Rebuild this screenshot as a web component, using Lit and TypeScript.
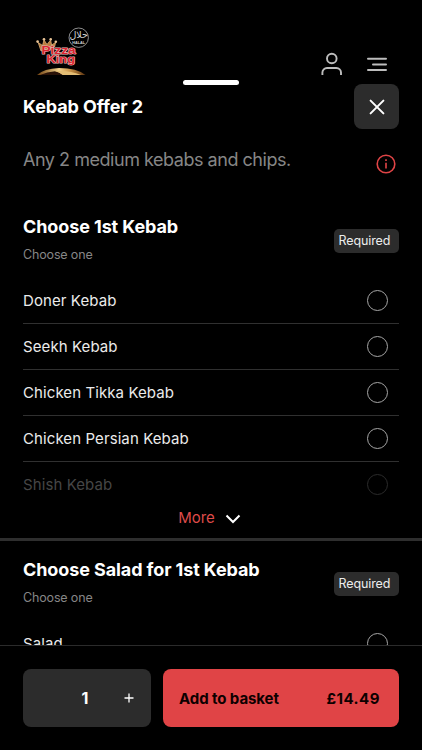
import { css, html, LitElement, svg } from 'lit';
import { customElement, property, state } from 'lit/decorators.js';
import { classMap } from 'lit/directives/class-map.js';

interface OptionGroup {
  title: string;
  hint: string;
  options: string[];
  /** Number of options shown before the list is collapsed. */
  visible?: number;
}

const GROUPS: OptionGroup[] = [
  {
    title: 'Choose 1st Kebab',
    hint: 'Choose one',
    options: [
      'Doner Kebab',
      'Seekh Kebab',
      'Chicken Tikka Kebab',
      'Chicken Persian Kebab',
      'Shish Kebab',
    ],
    visible: 4,
  },
  {
    title: 'Choose Salad for 1st Kebab',
    hint: 'Choose one',
    options: ['Salad'],
  },
];

const UNIT_PRICE = 14.49;

/**
 * Restaurant logo with crown and halal seal.
 */
@customElement('brand-logo')
export class BrandLogo extends LitElement {
  static override styles = css`
    :host {
      display: block;
      width: 56px;
      height: 50px;
    }

    svg {
      display: block;
    }

    .name {
      font: 700 11px 'Liberation Sans', sans-serif;
      fill: #dc2430;
      stroke: #e3b9b6;
      stroke-width: 1.1px;
      stroke-linejoin: round;
      paint-order: stroke;
    }

    .seal-arabic {
      font: 9.5px 'DejaVu Sans', sans-serif;
      fill: #d4d4d4;
    }

    .seal-latin {
      font: 700 3.8px 'Liberation Sans', sans-serif;
      fill: #d4d4d4;
    }
  `;

  private renderCrown() {
    return svg`
      <path d="M6 24 L3.2 15.5 L7.5 18.5 L9 13 L12 17.5 L15.6 13 L16.6 18 L20.6 15.5 L19.5 20 Z"
        fill="#b87a3c" stroke="#dcae76" stroke-width="0.8" />
      <g fill="#e9c395">
        <circle cx="2.6" cy="14.6" r="1.3" />
        <circle cx="9" cy="12.2" r="1.3" />
        <circle cx="15.7" cy="12.2" r="1.3" />
        <circle cx="20.8" cy="14.8" r="1.3" />
      </g>
    `;
  }

  override render() {
    return html`
      <svg width="56" height="50" viewBox="0 0 56 50">
        <defs>
          <linearGradient id="crust" x1="0" x2="1">
            <stop offset="0" stop-color="#70400f" />
            <stop offset="0.45" stop-color="#f2d28c" />
            <stop offset="0.7" stop-color="#c58e43" />
            <stop offset="1" stop-color="#5a3210" />
          </linearGradient>
        </defs>
        ${this.renderCrown()}
        <text class="name" x="6.5" y="27" textLength="34" lengthAdjust="spacingAndGlyphs">Pizza</text>
        <text class="name" x="11.5" y="36.2" textLength="28.5" lengthAdjust="spacingAndGlyphs">King</text>
        <path d="M2 48 Q9 41.5 24 41 Q42 41 50.5 48Z" fill="url(#crust)" />
        <path d="M5 48 Q12 44.6 20 44.2 Q24 45 28 48Z" fill="#2a1208" />
        <path d="M20 44.2 Q34 43 46 48 H28 Q24 45 20 44.2Z" fill="#e3bd74" />
        <circle cx="43.7" cy="10.7" r="9.7" fill="#000" stroke="#b0b0b0" stroke-width="0.8" />
        <text class="seal-arabic" x="43.7" y="11" text-anchor="middle">حلال</text>
        <text class="seal-latin" x="43.7" y="17" text-anchor="middle">HALAL</text>
      </svg>
    `;
  }
}

/**
 * One choice list of the offer.
 */
@customElement('option-group')
export class OptionGroupElement extends LitElement {
  @property({ type: Object }) group!: OptionGroup;
  @state() private expanded = false;
  @state() private selected = '';

  static override styles = css`
    :host {
      display: block;
      padding: 0 23px;
    }

    .head {
      display: flex;
      align-items: center;
      justify-content: space-between;
      height: 56px;
    }

    h2 {
      margin: 0;
      font-size: 18px;
      line-height: 28px;
      font-weight: 650;
      letter-spacing: -0.1px;
      color: #fff;
    }

    .hint {
      margin: 0;
      font-size: 12.5px;
      line-height: 28px;
      letter-spacing: -0.15px;
      color: #868686;
    }

    .badge {
      box-sizing: border-box;
      width: 65px;
      height: 24px;
      padding-left: 4.5px;
      border-radius: 5px;
      background: #2c2c2c;
      color: #ececec;
      font-size: 12.5px;
      line-height: 24px;
      letter-spacing: -0.1px;
    }

    ul {
      margin: 9px 0 0;
      padding: 0;
      list-style: none;
    }

    li {
      display: flex;
      box-sizing: border-box;
      align-items: center;
      justify-content: space-between;
      height: 46px;
      padding-right: 11px;
      border-bottom: 1px solid #303030;
      color: #ebebeb;
      font-size: 15px;
      letter-spacing: 0.09px;
      cursor: pointer;
    }

    li:last-child {
      border-bottom-color: transparent;
    }

    .faded {
      color: #464646;
    }

    .radio {
      box-sizing: border-box;
      width: 21px;
      height: 21px;
      border: 1px solid #a6a6a6;
      border-radius: 50%;
    }

    .faded .radio {
      border-color: #2b2b2b;
    }

    .radio--on {
      border: 6px solid #e04446;
    }

    .more {
      display: flex;
      align-items: center;
      justify-content: center;
      gap: 10px;
      width: 100%;
      height: 30px;
      padding: 0 3px 11px 0;
      border: none;
      background: none;
      color: #de4b49;
      font: inherit;
      font-size: 15px;
      cursor: pointer;
    }

    .more svg {
      margin-top: 2px;
    }
  `;

  private renderOption(name: string, index: number) {
    const faded =
      !this.expanded && index >= (this.group.visible ?? Infinity);

    return html`
      <li class=${classMap({ faded })} @click=${() => (this.selected = name)}>
        <span>${name}</span>
        <span
          class=${classMap({ radio: true, 'radio--on': this.selected === name })}
        ></span>
      </li>
    `;
  }

  override render() {
    const { title, hint, options, visible } = this.group;

    return html`
      <div class="head">
        <div>
          <h2>${title}</h2>
          <p class="hint">${hint}</p>
        </div>
        <span class="badge">Required</span>
      </div>
      <ul>
        ${options.map((name, i) => this.renderOption(name, i))}
      </ul>
      ${visible && !this.expanded
        ? html`
            <button class="more" @click=${() => (this.expanded = true)}>
              More
              <svg width="16" height="10" viewBox="0 0 16 10" fill="none">
                <path d="M1.5 1.5 L8 8 L14.5 1.5" stroke="#fff" stroke-width="2" />
              </svg>
            </button>
          `
        : ''}
    `;
  }
}

@customElement('app-root')
export class AppRoot extends LitElement {
  @state() private quantity = 1;

  static override styles = css`
    :host {
      display: flex;
      flex-direction: column;
      height: 750px;
      overflow: hidden;
      background: #000;
      font-family: Inter, 'Liberation Sans', sans-serif;
    }

    .topbar {
      display: flex;
      flex: none;
      box-sizing: border-box;
      height: 80px;
      padding: 27px 34px 0 35px;
    }

    .topbar svg {
      margin-top: 25px;
    }

    .topbar brand-logo {
      margin-right: auto;
    }

    .user {
      margin-right: 23px;
    }

    .sheet {
      display: flex;
      flex: 1;
      flex-direction: column;
      min-height: 0;
      overflow: hidden;
    }

    .handle {
      flex: none;
      width: 56px;
      height: 5px;
      margin: 0 auto -1px;
      border-radius: 3px;
      background: #fff;
    }

    .title-row,
    .description {
      display: flex;
      flex: none;
      align-items: center;
      justify-content: space-between;
      padding: 0 23px;
    }

    h1 {
      margin: 0;
      font-size: 18px;
      font-weight: 650;
      letter-spacing: -0.1px;
      color: #fff;
    }

    .close {
      display: grid;
      place-items: center;
      width: 45px;
      height: 45px;
      padding: 0;
      border: none;
      border-radius: 8px;
      background: #2c2c2c;
    }

    .description {
      height: 61px;
      margin-bottom: 23px;
      padding-right: 26px;
      color: #868686;
      font-size: 18px;
      letter-spacing: -0.47px;
    }

    .description svg {
      margin-top: 8px;
    }

    option-group {
      flex: none;
    }

    .divider {
      flex: none;
      height: 3px;
      margin-bottom: 15px;
      background: #2e2e2e;
    }

    .footer {
      display: flex;
      flex: none;
      box-sizing: border-box;
      gap: 12px;
      height: 105px;
      padding: 23px 23px 0;
      border-top: 1px solid #2b2b2b;
    }

    .stepper,
    .basket {
      box-sizing: border-box;
      height: 58px;
      border-radius: 8px;
    }

    .stepper {
      display: grid;
      grid-template-columns: 41px 42px 45px;
      align-items: center;
      justify-items: center;
      background: #2c2c2c;
      color: #fff;
      font-size: 16px;
      font-weight: 650;
    }

    .quantity {
      grid-column: 2;
    }

    .stepper button {
      grid-column: 3;
      padding: 0;
      border: none;
      background: none;
      line-height: 0;
    }

    .basket {
      display: flex;
      flex: 1;
      align-items: center;
      justify-content: space-between;
      padding: 0 19px 0 16px;
      border: none;
      background: #e04446;
      color: #0d0000;
      font: inherit;
      font-size: 15px;
      font-weight: 650;
      letter-spacing: -0.08px;
    }

    .price {
      letter-spacing: 0.5px;
    }
  `;

  override render() {
    return html`
      <header class="topbar">
        <brand-logo></brand-logo>
        <svg class="user" width="22" height="24" viewBox="0 0 22 24" fill="none" stroke="#bdbdbd" stroke-width="1.9">
          <circle cx="10.8" cy="6.5" r="4.8" />
          <path d="M1.4 23 V20.6 A4.6 4.6 0 0 1 6 16 H15.4 A4.6 4.6 0 0 1 20 20.6 V23" />
        </svg>
        <svg width="22" height="24" viewBox="0 0 22 24" fill="none" stroke="#bdbdbd" stroke-width="2" stroke-linecap="round">
          <path d="M2 6.7 H20 M7 12.4 H20 M2 18 H20" />
        </svg>
      </header>
      <main class="sheet">
        <div class="handle"></div>
        <div class="title-row">
          <h1>Kebab Offer 2</h1>
          <button class="close" aria-label="Close">
            <svg width="16" height="16" viewBox="0 0 16 16">
              <path d="M1.6 1.6 L14.4 14.4 M14.4 1.6 L1.6 14.4" stroke="#fff" stroke-width="2" stroke-linecap="round" />
            </svg>
          </button>
        </div>
        <div class="description">
          <span>Any 2 medium kebabs and chips.</span>
          <svg width="20" height="20" viewBox="0 0 20 20" fill="none" stroke="#e04446">
            <circle cx="10" cy="10" r="8.8" stroke-width="1.6" />
            <path d="M10 8.8 V14.4 M10 5.2 V7" stroke-width="1.6" />
          </svg>
        </div>
        ${GROUPS.map(
          (group, i) => html`
            ${i > 0 ? html`<div class="divider"></div>` : ''}
            <option-group .group=${group}></option-group>
          `,
        )}
      </main>
      <footer class="footer">
        <div class="stepper">
          <span class="quantity">${this.quantity}</span>
          <button aria-label="Increase quantity" @click=${this.increase}>
            <svg width="10" height="10" viewBox="0 0 10 10">
              <path d="M0.5 5 H9.5 M5 0.5 V9.5" stroke="#fff" stroke-width="1.3" />
            </svg>
          </button>
        </div>
        <button class="basket">
          <span>Add to basket</span>
          <span class="price">£${(UNIT_PRICE * this.quantity).toFixed(2)}</span>
        </button>
      </footer>
    `;
  }

  private increase() {
    this.quantity += 1;
  }
}

declare global {
  interface HTMLElementTagNameMap {
    'app-root': AppRoot;
    'brand-logo': BrandLogo;
    'option-group': OptionGroupElement;
  }
}
